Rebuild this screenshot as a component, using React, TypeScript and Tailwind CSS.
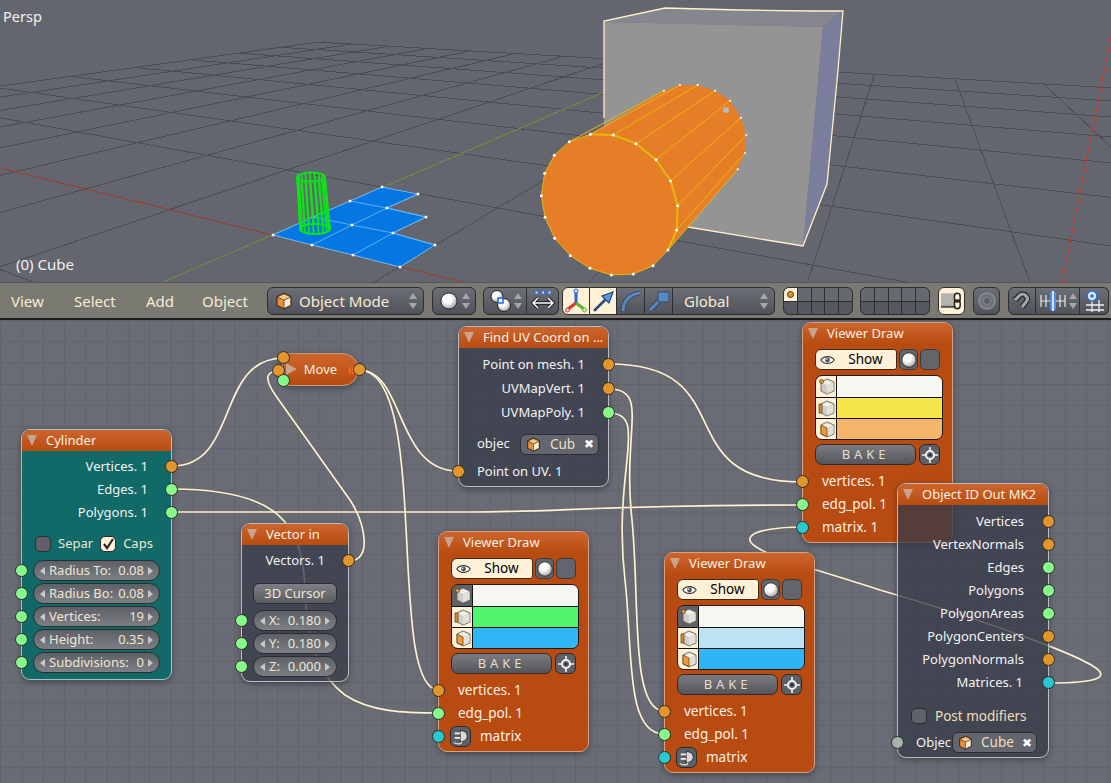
import React from 'react';

// perspective ground grid, taken from the vanishing points of the reference
const project = (u: number, v: number) => {
  const a = -0.1103 * u;
  const b = 0.2102 * v;
  const w = a + b + 1;
  return { x: (a * -760 + b * 911 + 272) / w, y: (a * -20 + b * -40 + 235) / w, w };
};

const gridLine = (fn: (t: number) => { x: number; y: number; w: number }) => {
  const pts: string[] = [];
  for (let t = -8; t <= 8; t += 0.25) {
    const p = fn(t);
    if (p.w > 0.04) pts.push(`${p.x.toFixed(1)},${p.y.toFixed(1)}`);
  }
  return pts.join(' ');
};

const range = [-8, -7, -6, -5, -4, -3, -2, -1, 0, 1, 2, 3, 4, 5, 6, 7, 8];

const disc = [[181, 403], [250, 405], [318, 431], [378, 479], [422, 543], [443, 617], [440, 690], [414, 750], [369, 797], [310, 822], [244, 825], [180, 805], [121, 767], [74, 715], [45, 652], [34, 587], [44, 520], [73, 466], [118, 425]].map(([x, y]) => [530 + x / 3, y / 3]);
const back = [[402, 272], [450, 255], [503, 255], [555, 272], [600, 302], [633, 353], [649, 405], [645, 459], [623, 508]].map(([x, y]) => [530 + x / 3, y / 3]);
const sides = [[0, 1], [1, 2], [2, 3], [3, 4], [4, 5], [5, 6], [6, 7], [7, 8]];
const toPts = (l: number[][]) => l.map(([x, y]) => `${x},${y}`).join(' ');

const planeVerts = [[273, 235], [312, 245], [353, 255], [400, 267], [435, 245], [393, 233], [426, 217], [387, 208], [418, 194], [382, 187], [350, 201], [313, 217], [352, 225]];

function Viewport() {
  const ring = Array.from({ length: 19 }, (_, i) => (i * Math.PI * 2) / 19);
  return (
    <div className="relative h-[282px] bg-[#63666e] overflow-hidden">
      <svg className="absolute inset-0" width="1111" height="282" viewBox="0 0 1111 282">
        <g fill="none" stroke="#4b4d51" strokeWidth="1" shapeRendering="crispEdges">
          {range.map((v) => <polyline key={`a${v}`} points={gridLine((t) => project(t, v))} />)}
          {range.map((u) => <polyline key={`b${u}`} points={gridLine((t) => project(u, t))} />)}
        </g>
        <g fill="none" strokeWidth="1" shapeRendering="crispEdges">
          <polyline points={gridLine((t) => project(t, 0))} stroke="#a03a2c" />
          <polyline points={gridLine((t) => project(0, t))} stroke="#6e8f3c" />
          <line x1="1111" y1="37" x2="1062" y2="283" stroke="#c23a36" />
        </g>

        {/* plane */}
        <polygon points="273,235 312,245 353,255 400,267 435,245 393,233 426,217 387,208 418,194 382,187 350,201 313,217" fill="#0577e3" stroke="#73bdf0" strokeWidth="1" />
        <g fill="none" stroke="#5fb0ee" strokeWidth="1">
          <polyline points="312,245 352,225 387,208 418,194" />
          <polyline points="353,255 393,233 426,217" />
          <polyline points="313,217 352,225 393,233 435,245" />
          <polyline points="350,201 387,208 426,217" />
        </g>
        {planeVerts.map(([x, y]) => <rect key={`${x}${y}`} x={x - 1.25} y={y - 1.25} width="2.5" height="2.5" fill="#fff" />)}

        {/* green wire cylinder */}
        <g fill="none" stroke="#12e01c" strokeWidth="1.8">
          <ellipse cx="311" cy="177" rx="14" ry="4.5" />
          <ellipse cx="315" cy="229" rx="15" ry="5" />
          {ring.map((a) => (
            <line key={a} x1={311 + 14 * Math.cos(a)} y1={177 + 4.5 * Math.sin(a)} x2={315 + 15 * Math.cos(a)} y2={229 + 5 * Math.sin(a)} />
          ))}
        </g>

        {/* cube */}
        <polygon points="604,21 665,8 843,11 823,27 604,22" fill="#868690" />
        <polygon points="843,11 827,184 803,246 823,27" fill="#7a7d9b" />
        <polygon points="604,22 823,27 803,246 688,227 604,215" fill="#949494" />
        <polyline points="604,118 604,21 665,8 702,9 740,10 809,11 843,11 838,70 827,184 803,246 688,227" fill="none" stroke="#fff0c8" strokeWidth="1.3" />

        {/* orange cylinder */}
        <polygon points={`${toPts(back)} ${toPts(disc.slice(7, 8))} ${toPts([disc[12], disc[18], disc[0]])}`} fill="#e57e26" />
        <polygon points={toPts(disc)} fill="#e57e26" />
        <g fill="none" stroke="#e8b60e" strokeWidth="1">
          {sides.map(([d, b], i) => <line key={i} x1={disc[d][0]} y1={disc[d][1]} x2={back[b][0]} y2={back[b][1]} />)}
          <line x1={disc[18][0]} y1={disc[18][1]} x2={back[0][0]} y2={back[0][1]} />
          <polygon points={toPts(disc)} />
        </g>
        <polyline points={toPts(disc.slice(0, 8))} fill="none" stroke="#e8b60e" strokeWidth="2" />
        {disc.map(([x, y], i) => <circle key={i} cx={x} cy={y} r="1.5" fill="#fff" />)}
        {back.map(([x, y], i) => <circle key={i} cx={x} cy={y} r="1" fill="#fff" />)}
        <circle cx="726" cy="110" r="3" fill="#b9b9b9" />
      </svg>
      <div className="absolute left-[3px] top-[7px] text-[14.5px] leading-[18px] text-[#f0f0f0]">Persp</div>
      <div className="absolute left-[16px] top-[255px] text-[15px] leading-[18px] text-[#f0f0f0]">(0) Cube</div>
    </div>
  );
}

/* ---------- small icons ---------- */

const Cube = ({ size = 18 }: { size?: number }) => (
  <svg width={size} height={size} viewBox="0 0 20 20" className="shrink-0">
    <polygon points="10,1 18,5 18,15 10,19 2,15 2,5" fill="#7a4a20" stroke="#3d2a18" strokeWidth="1" />
    <polygon points="10,2.5 16.5,5.5 10,8.5 3.5,5.5" fill="#f6c88c" />
    <polygon points="3,6.5 9.5,9.5 9.5,17.5 3,14.5" fill="#e8913a" />
    <polygon points="10.5,9.5 17,6.5 17,14.5 10.5,17.5" fill="#fbeedb" />
  </svg>
);

const Sphere = ({ size = 18 }: { size?: number }) => (
  <svg width={size} height={size} viewBox="0 0 20 20" className="shrink-0">
    <defs>
      <radialGradient id="ball" cx="0.4" cy="0.35" r="0.75">
        <stop offset="0.35" stopColor="#ffffff" />
        <stop offset="1" stopColor="#8d8d8d" />
      </radialGradient>
    </defs>
    <circle cx="10" cy="10" r="9" fill="url(#ball)" stroke="#1e1e1e" strokeWidth="1" />
  </svg>
);

const UpDown = () => (
  <svg width="8" height="20" viewBox="0 0 8 20" className="shrink-0">
    <polygon points="4,2 8,8 0,8" fill="#a5a7ab" />
    <polygon points="4,18 8,12 0,12" fill="#a5a7ab" />
  </svg>
);

const Pivot = () => (
  <svg width="24" height="24" viewBox="0 0 24 24">
    <circle cx="8" cy="7.5" r="6" fill="url(#ball)" stroke="#1e1e1e" />
    <circle cx="15" cy="16" r="6.5" fill="url(#ball)" stroke="#1e1e1e" />
    <rect x="9" y="9" width="5" height="5" fill="#fff" stroke="#2a6ae0" strokeWidth="1.6" />
  </svg>
);

const AlignArrows = () => (
  <svg width="24" height="24" viewBox="0 0 24 24">
    <rect x="4" y="2" width="3" height="3" fill="#cfe0f8" stroke="#2f6fd8" />
    <rect x="10.5" y="2" width="3" height="3" fill="#cfe0f8" stroke="#2f6fd8" />
    <rect x="17" y="2" width="3" height="3" fill="#cfe0f8" stroke="#2f6fd8" />
    <path d="M2 14h20M7 9l-5 5 5 5M17 9l5 5-5 5" fill="none" stroke="#1c1c1c" strokeWidth="3.4" />
    <path d="M2 14h20M7 9l-5 5 5 5M17 9l5 5-5 5" fill="none" stroke="#fff" strokeWidth="1.5" />
  </svg>
);

const Axes = () => (
  <svg width="24" height="26" viewBox="0 0 24 26">
    <path d="M12 15V4" stroke="#2f63d8" strokeWidth="3" />
    <path d="M12 15L4 21" stroke="#d8362c" strokeWidth="3" />
    <path d="M12 15l8 6" stroke="#59b432" strokeWidth="3" />
    <circle cx="12" cy="3" r="2" fill="#dfe8f8" stroke="#2f63d8" />
    <circle cx="3.5" cy="22" r="2" fill="#f4d4d0" stroke="#d8362c" />
    <circle cx="20.5" cy="22" r="2" fill="#e0f0d0" stroke="#59b432" />
  </svg>
);

const ArrowIcon = () => (
  <svg width="24" height="24" viewBox="0 0 24 24">
    <path d="M3 21L14 10l-3-3 11-4-4 11-3-3L4 22z" fill="#5a9ce8" stroke="#24426c" strokeWidth="1.2" />
  </svg>
);

const ArcIcon = () => (
  <svg width="24" height="24" viewBox="0 0 24 24">
    <path d="M4 22C4 12 11 5 21 4" fill="none" stroke="#3a4a5e" strokeWidth="5" />
    <path d="M4 22C4 12 11 5 21 4" fill="none" stroke="#5688c2" strokeWidth="3" />
  </svg>
);

const ScaleIcon = () => (
  <svg width="24" height="24" viewBox="0 0 24 24">
    <path d="M3 21L13 11" stroke="#3a4a5e" strokeWidth="5" />
    <path d="M3 21L13 11" stroke="#5688c2" strokeWidth="3" />
    <rect x="11" y="3" width="11" height="10" fill="#5688c2" stroke="#3a4a5e" />
  </svg>
);

const LinkIcon = () => (
  <svg width="26" height="24" viewBox="0 0 26 24">
    <rect x="2" y="4" width="15" height="15" fill="#b4b4ae" />
    <rect x="2" y="17" width="15" height="2" fill="#55554f" />
    <rect x="16" y="4" width="6" height="9" rx="3" fill="none" stroke="#222" strokeWidth="1.5" />
    <rect x="16" y="11" width="6" height="9" rx="3" fill="none" stroke="#222" strokeWidth="1.5" />
  </svg>
);

const TargetRing = () => (
  <svg width="20" height="20" viewBox="0 0 20 20">
    <circle cx="10" cy="10" r="8" fill="#70737a" stroke="#8b8e94" strokeWidth="1.5" />
    <circle cx="10" cy="10" r="3.5" fill="#5a5d63" stroke="#878a90" />
  </svg>
);

const Magnet = () => (
  <svg width="22" height="22" viewBox="0 0 22 22">
    <path d="M4 10L9 5c4-3 10 3 6 7l-4 5" fill="none" stroke="#26282c" strokeWidth="5.5" />
    <path d="M4 10L9 5c4-3 10 3 6 7l-4 5" fill="none" stroke="#a4a6aa" strokeWidth="3" />
  </svg>
);

const SnapIncrement = () => (
  <svg width="28" height="22" viewBox="0 0 28 22">
    <path d="M2 5v12M7 5v12M21 5v12M26 5v12M2 11h24" fill="none" stroke="#e8e8e8" strokeWidth="1.2" />
    <rect x="11" y="1" width="6" height="20" rx="3" fill="#4f8fe8" />
    <rect x="13" y="1" width="2" height="20" fill="#cfe0f8" />
  </svg>
);

const SnapGrid = () => (
  <svg width="24" height="24" viewBox="0 0 24 24">
    <path d="M4 16h18M4 21h18M10 11v12M17 11v12" fill="none" stroke="#f0f0f0" strokeWidth="1.3" />
    <circle cx="10" cy="7" r="5" fill="#dfe8f8" stroke="#2f6fd8" strokeWidth="1.6" />
    <circle cx="10" cy="7" r="1.8" fill="#2f6fd8" />
  </svg>
);

const Eye = () => (
  <svg width="15" height="10" viewBox="0 0 20 12" className="shrink-0">
    <path d="M1 6c4-6 14-6 18 0-4 6-14 6-18 0z" fill="#fff" stroke="#333" strokeWidth="1.4" />
    <circle cx="10" cy="6" r="3.2" fill="#555" />
    <circle cx="9" cy="5" r="1" fill="#fff" />
  </svg>
);

const Crosshair = () => (
  <svg width="16" height="16" viewBox="0 0 16 16">
    <circle cx="8" cy="8" r="4" fill="none" stroke="#f2f2f2" strokeWidth="2" />
    <path d="M8 0v4M8 12v4M0 8h4M12 8h4" stroke="#f2f2f2" strokeWidth="1.6" />
    <circle cx="8" cy="8" r="1.2" fill="#222" />
  </svg>
);

const Plug = () => (
  <svg width="18" height="18" viewBox="0 0 20 20">
    <path d="M9 3h2a6 6 0 010 12H9z" fill="#d8d8d8" stroke="#222" />
    <path d="M3 6h6M3 11h6" stroke="#f0f0f0" strokeWidth="2" />
    <path d="M11 15c0 4-7 3-9 1" fill="none" stroke="#e0e0e0" strokeWidth="1.4" />
  </svg>
);

const CheckMark = () => (
  <svg width="14" height="14" viewBox="0 0 14 14">
    <path d="M3 7l3 4 6-9" fill="none" stroke="#2a2a2a" strokeWidth="2.2" />
  </svg>
);

const TileCube = ({ mark }: { mark: 'dot' | 'side' | 'face' }) => (
  <svg width="17" height="17" viewBox="0 0 17 17">
    <polygon points="9,1 16,4 16,13 9,16 3,13 3,4" fill="#cfcdc6" stroke="#5b5b55" strokeWidth="0.8" />
    <polygon points="9,2 15,4.5 9,7 4,4.5" fill="#f2efe8" />
    <polygon points="9,7.5 15.5,5 15.5,12.5 9,15.5" fill="#e3e0d8" />
    {mark === 'dot' && <circle cx="3.5" cy="3.5" r="2" fill="#e89a3a" stroke="#5a3a10" strokeWidth="0.7" />}
    {mark === 'side' && <rect x="1" y="4" width="3" height="9" fill="#d98a35" stroke="#5a3a10" strokeWidth="0.7" />}
    {mark === 'face' && <polygon points="3,4 9,7 9,15.5 3,13" fill="#f09a3c" stroke="#5a3a10" strokeWidth="0.7" />}
  </svg>
);

/* ---------- node parts ---------- */

const socketColor = {
  orange: 'bg-[#e2952a]',
  green: 'bg-[#86f98a]',
  cyan: 'bg-[#27c9cf]',
  gray: 'bg-[#a3b3ab]',
};

const Socket = ({ color, className }: { color: keyof typeof socketColor; className: string }) => (
  <span className={`absolute z-10 h-[13px] w-[13px] rounded-full border border-[#2c2c2c] ${socketColor[color]} ${className}`} />
);

const NodeHeader = ({ title }: { title: string }) => (
  <div className="flex h-[21px] shrink-0 items-center gap-[9px] rounded-t-[8px] bg-gradient-to-b from-[#cc652c] to-[#b84c10] pl-[5px] text-[13px] whitespace-nowrap text-[#f8f0e2]">
    <span className="h-0 w-0 border-x-[5px] border-t-[11px] border-x-transparent border-t-[#c8a390]" />
    {title}
  </div>
);

const OutRow = ({ label, color, pr = 'pr-[23px]', h = 'h-[23px]' }: { label: string; color: keyof typeof socketColor; pr?: string; h?: string }) => (
  <div className={`relative flex shrink-0 items-center justify-end text-[13px] whitespace-nowrap text-[#f2f2f2] ${h} ${pr}`}>
    {label}
    <Socket color={color} className="right-[-7px] top-[5px]" />
  </div>
);

const Field = ({ label, value, socket = true }: { label: string; value: string; socket?: boolean }) => (
  <div className="relative flex h-[23px] shrink-0 items-center">
    {socket && <Socket color="green" className="left-[-7px] top-[5px]" />}
    <div className="mx-[11px] flex h-[21px] flex-1 items-center justify-between rounded-full border border-[#2a2c30] bg-gradient-to-b from-[#5d6066] to-[#7d7f84] px-[6px] text-[13px] text-[#efe6d3]">
      <span className="h-0 w-0 border-y-[4px] border-r-[5px] border-y-transparent border-r-[#c8c8c8]" />
      <span className="flex flex-1 justify-between px-[4px] whitespace-nowrap">
        <span>{label}</span>
        <span>{value}</span>
      </span>
      <span className="h-0 w-0 border-y-[4px] border-l-[5px] border-y-transparent border-l-[#c8c8c8]" />
    </div>
  </div>
);

const Picker = ({ label, className }: { label: string; className: string }) => (
  <div className={`flex h-[21px] items-center justify-between rounded-[6px] border border-[#2c2e34] bg-[#63666e] pl-[5px] pr-[4px] text-[13.5px] text-[#f0dfb8] ${className}`}>
    <Cube size={15} />
    <span>{label}</span>
    <span className="text-[12px] leading-none font-bold text-white">✖</span>
  </div>
);

type ViewerProps = {
  className: string;
  swatches: string[];
  firstDark?: boolean;
  matrixPlug?: boolean;
};

function ViewerDraw({ className, swatches, firstDark, matrixPlug }: ViewerProps) {
  const marks: ('dot' | 'side' | 'face')[] = ['dot', 'side', 'face'];
  return (
    <div className={`absolute flex h-[221px] w-[151px] flex-col rounded-[9px] border border-[#d9a184] bg-[#b84b12] shadow-[0_2px_6px_rgba(0,0,0,0.35)] ${className}`}>
      <NodeHeader title="Viewer Draw" />
      <div className="flex flex-col px-[12px] pt-[5px]">
        <div className="flex h-[21px] gap-[2px]">
          <div className="flex w-[84px] items-center rounded-l-[6px] rounded-r-[3px] border border-[#3a2a1c] bg-[#fff1d8] pl-[4px] text-[13.5px] text-black">
            <Eye />
            <span className="flex-1 text-center">Show</span>
          </div>
          <div className="flex w-[20px] items-center justify-center rounded-[5px] border border-[#3a3a3a] bg-[#62656c]">
            <Sphere size={16} />
          </div>
          <div className="w-[20px] rounded-[5px] border border-[#3a3a3a] bg-[#62656c]" />
        </div>
        <div className="mt-[5px] flex w-[128px] flex-col overflow-hidden rounded-[7px] border border-[#1c1c1c]">
          {swatches.map((c, i) => (
            <div key={i} className={`flex h-[21px] border-[#111] ${i > 0 ? 'border-t' : ''}`}>
              <div className={`flex w-[21px] items-center justify-center border-r border-[#111] ${firstDark && i === 0 ? 'bg-[#5e6168]' : 'bg-[#fff1d8]'}`}>
                <TileCube mark={marks[i]} />
              </div>
              <div className={`flex-1 ${c}`} />
            </div>
          ))}
        </div>
        <div className="mt-[4px] flex h-[21px] justify-between">
          <div className="flex w-[101px] items-center justify-center rounded-[7px] border border-[#2c2c2c] bg-gradient-to-b from-[#7a7c80] to-[#54565c] text-[13px] tracking-[0.3em] text-[#e6dcc8]">BAKE</div>
          <div className="flex w-[21px] items-center justify-center rounded-[6px] border border-[#2c2c2c] bg-[#5d6067]">
            <Crosshair />
          </div>
        </div>
      </div>
      <div className="mt-[5px] flex flex-col text-[13.5px] text-[#fbf0e6]">
        <div className="relative flex h-[23px] items-center pl-[19px]">
          <Socket color="orange" className="left-[-7px] top-[5px]" />
          vertices. 1
        </div>
        <div className="relative flex h-[23px] items-center pl-[19px]">
          <Socket color="green" className="left-[-7px] top-[5px]" />
          edg_pol. 1
        </div>
        <div className="relative flex h-[23px] items-center pl-[19px]">
          <Socket color="cyan" className="left-[-7px] top-[5px]" />
          {matrixPlug ? (
            <>
              <span className="ml-[-8px] flex h-[21px] w-[21px] items-center justify-center rounded-[6px] border border-[#2c2c2c] bg-[#5d6067]">
                <Plug />
              </span>
              <span className="ml-[9px]">matrix</span>
            </>
          ) : (
            'matrix. 1'
          )}
        </div>
      </div>
    </div>
  );
}

/* ---------- editor ---------- */

const wires = [
  'M172,466 C240,466 215,358 284,358',
  'M349,561 C372,561 366,525 350,500 L276,396 C262,376 268,371 279,371',
  'M359,370 C432,370 385,690 439,690',
  'M359,370 C405,370 395,471 458,471',
  'M172,489 C280,489 303,525 305,590 C308,650 322,678 345,695 C370,712 405,713 439,713',
  'M172,512 L470,512 C560,512 600,505 802,505',
  'M609,364 C745,364 665,482 802,482',
  'M609,389 C650,389 622,430 632,520 C640,600 630,711 664,711',
  'M609,413 C650,413 612,470 625,580 C633,650 625,734 664,734',
  'M1049,683 C1085,683 1105,680 1100,672 C1093,660 1000,625 880,590 C820,570 745,552 750,538 C753,530 780,527 802,527',
];

const Layers = ({ active }: { active?: boolean }) => (
  <div className="grid h-[28px] w-[70px] grid-cols-5 grid-rows-2 gap-px overflow-hidden rounded-[6px] border border-[#2e2e2e] bg-[#2e2e2e]">
    {Array.from({ length: 10 }, (_, i) => (
      <div key={i} className={active && i === 0 ? 'flex items-center justify-center bg-[#fff1d8]' : i < 5 ? 'bg-[#66696f]' : 'bg-[#55585e]'}>
        {active && i === 0 && <span className="h-[7px] w-[7px] rounded-full border border-[#4a3010] bg-[#e2952a]" />}
      </div>
    ))}
  </div>
);

const btn = 'h-[28px] flex items-center border border-[#2e2e2e] bg-gradient-to-b from-[#6c6f75] to-[#505359]';

function Toolbar() {
  return (
    <div className="flex h-[38px] shrink-0 items-center border-t border-[#55565a] border-b-2 border-b-[#1a1a1a] bg-[#7a7a72] pt-[1px] pl-[11px] text-[15px] text-[#f6ecd4]">
      <span className="w-[63px]">View</span>
      <span className="w-[72px]">Select</span>
      <span className="w-[56px]">Add</span>
      <span className="w-[65px]">Object</span>
      <div className={`${btn} w-[157px] rounded-[6px] pl-[7px] pr-[6px]`}>
        <Cube />
        <span className="ml-[6px] flex-1">Object Mode</span>
        <UpDown />
      </div>
      <div className={`${btn} ml-[8px] w-[44px] gap-[4px] rounded-[6px] pl-[7px]`}>
        <Sphere />
        <UpDown />
      </div>
      <div className={`${btn} ml-[7px] w-[44px] gap-[1px] rounded-l-[6px] pl-[5px]`}>
        <Pivot />
        <UpDown />
      </div>
      <div className={`${btn} w-[32px] justify-center rounded-r-[6px] border-l-0`}>
        <AlignArrows />
      </div>
      <div className="ml-[3px] flex">
        <div className="flex h-[28px] w-[28px] items-center justify-center rounded-l-[6px] border border-[#2e2e2e] bg-[#fff1d8]"><Axes /></div>
        <div className="flex h-[28px] w-[27px] items-center justify-center border-y border-r border-[#2e2e2e] bg-[#fff1d8]"><ArrowIcon /></div>
        <div className={`${btn} w-[28px] justify-center border-l-0`}><ArcIcon /></div>
        <div className={`${btn} w-[28px] justify-center border-l-0`}><ScaleIcon /></div>
        <div className={`${btn} w-[102px] justify-between rounded-r-[6px] border-l-0 pl-[11px] pr-[6px]`}>
          Global
          <UpDown />
        </div>
      </div>
      <div className="ml-[8px]"><Layers active /></div>
      <div className="ml-[7px]"><Layers /></div>
      <div className="ml-[8px] flex h-[28px] w-[27px] items-center justify-center rounded-[6px] border border-[#2e2e2e] bg-[#fff1d8]"><LinkIcon /></div>
      <div className={`${btn} ml-[8px] w-[27px] justify-center rounded-[6px]`}><TargetRing /></div>
      <div className={`${btn} ml-[8px] w-[28px] justify-center rounded-l-[6px]`}><Magnet /></div>
      <div className={`${btn} w-[44px] justify-center gap-[2px] border-l-0`}><SnapIncrement /><UpDown /></div>
      <div className={`${btn} w-[29px] justify-center rounded-r-[6px] border-l-0`}><SnapGrid /></div>
    </div>
  );
}

const darkNode = 'absolute flex flex-col rounded-[9px] border border-[#b9bcc2] bg-[#373947c4] shadow-[0_2px_6px_rgba(0,0,0,0.35)]';

function NodeEditor() {
  return (
    <div className="relative flex-1 overflow-hidden bg-[#696c74] bg-[linear-gradient(#60636a_1px,transparent_1px),linear-gradient(90deg,#60636a_1px,transparent_1px)] bg-[size:21.3px_21.3px]">
      <svg className="absolute inset-0" width="1111" height="463" viewBox="0 320 1111 463">
        <g fill="none" strokeLinecap="round">
          {wires.map((d) => <path key={d} d={d} stroke="rgba(120,100,60,0.3)" strokeWidth="3.5" />)}
          {wires.map((d) => <path key={d + 'c'} d={d} stroke="#f8f2da" strokeWidth="1.7" />)}
        </g>
      </svg>

      {/* Cylinder */}
      <div className="absolute left-[21px] top-[109px] flex h-[251px] w-[151px] flex-col rounded-[9px] border border-[#a9c2c0] bg-[#116968] shadow-[0_2px_6px_rgba(0,0,0,0.35)]">
        <NodeHeader title="Cylinder" />
        <div className="flex flex-col pt-[4px] text-[#e9f3f2]">
          <OutRow label="Vertices. 1" color="orange" />
          <OutRow label="Edges. 1" color="green" />
          <OutRow label="Polygons. 1" color="green" />
          <div className="mt-[10px] mb-[5px] flex h-[20px] items-center pl-[13px] text-[13px] text-[#efe6d3]">
            <span className="h-[16px] w-[16px] rounded-[5px] border border-[#2c2c2c] bg-[#5f626a]" />
            <span className="ml-[7px]">Separ</span>
            <span className="ml-[7px] flex h-[16px] w-[16px] items-center justify-center rounded-[5px] border border-[#2c2c2c] bg-[#fff1d8]"><CheckMark /></span>
            <span className="ml-[7px]">Caps</span>
          </div>
          <Field label="Radius To:" value="0.08" />
          <Field label="Radius Bo:" value="0.08" />
          <Field label="Vertices:" value="19" />
          <Field label="Height:" value="0.35" />
          <Field label="Subdivisions:" value="0" />
        </div>
      </div>

      {/* Vector in */}
      <div className={`${darkNode} left-[241px] top-[203px] h-[159px] w-[108px]`}>
        <NodeHeader title="Vector in" />
        <div className="flex flex-col pt-[4px]">
          <OutRow label="Vectors. 1" color="orange" />
          <div className="mx-[11px] mt-[11px] mb-[5px] flex h-[21px] items-center justify-center rounded-[6px] border border-[#2a2c30] bg-gradient-to-b from-[#7d7f84] to-[#5a5d63] text-[13px] text-[#efe6d3]">3D Cursor</div>
          <Field label="X:" value="0.180" />
          <Field label="Y:" value="0.180" />
          <Field label="Z:" value="0.000" />
        </div>
      </div>

      {/* Move */}
      <div className="absolute left-[282px] top-[33px] flex h-[33px] w-[77px] items-center justify-center rounded-l-[9px] rounded-r-[17px] border border-[#c99a7a] bg-gradient-to-b from-[#cc652c] to-[#b84c10] text-[13px] text-[#f8f0e2] shadow-[0_2px_6px_rgba(0,0,0,0.35)]">
        <span className="absolute left-[3px] top-[9px] h-0 w-0 border-y-[6px] border-l-[11px] border-y-transparent border-l-[#c8a390]" />
        Move
        <span className="absolute right-[4px] top-[13px] h-[7px] w-[5px] border-x-2 border-[#f06a1a]" />
      </div>
      <Socket color="orange" className="left-[277px] top-[31px]" />
      <Socket color="orange" className="left-[272px] top-[44px]" />
      <Socket color="green" className="left-[277px] top-[54px]" />
      <Socket color="orange" className="left-[353px] top-[43px]" />

      {/* Find UV Coord */}
      <div className={`${darkNode} left-[458px] top-[6px] h-[161px] w-[151px]`}>
        <NodeHeader title="Find UV Coord on ..." />
        <div className="flex flex-col pt-[5px]">
          <OutRow label="Point on mesh. 1" color="orange" h="h-[24px]" />
          <OutRow label="UVMapVert. 1" color="orange" h="h-[24px]" />
          <OutRow label="UVMapPoly. 1" color="green" h="h-[24px]" />
          <div className="mt-[8px] flex h-[22px] items-center pl-[18px] text-[13px] text-[#f2f2f2]">
            <span className="w-[43px]">objec</span>
            <Picker label="Cub" className="w-[79px]" />
          </div>
          <div className="relative mt-[5px] flex h-[23px] items-center pl-[18px] text-[13px] text-[#f2f2f2]">
            <Socket color="orange" className="left-[-7px] top-[5px]" />
            Point on UV. 1
          </div>
        </div>
      </div>

      <ViewerDraw className="left-[438px] top-[211px]" swatches={['bg-[#f7f7f2]', 'bg-[#52f56f]', 'bg-[#2fb8f5]']} firstDark matrixPlug />
      <ViewerDraw className="left-[664px] top-[232px]" swatches={['bg-[#f7f7f2]', 'bg-[#bde2f2]', 'bg-[#2fb4f5]']} firstDark matrixPlug />
      <ViewerDraw className="left-[802px] top-[2px]" swatches={['bg-[#f7f7f2]', 'bg-[#f5e44a]', 'bg-[#f5b56a]']} />

      {/* Object ID Out */}
      <div className={`${darkNode} left-[897px] top-[163px] h-[275px] w-[152px]`}>
        <NodeHeader title="Object ID Out MK2" />
        <div className="flex flex-col pt-[5px]">
          <OutRow label="Vertices" color="orange" pr="pr-[24px]" />
          <OutRow label="VertexNormals" color="orange" pr="pr-[24px]" />
          <OutRow label="Edges" color="green" pr="pr-[24px]" />
          <OutRow label="Polygons" color="green" pr="pr-[24px]" />
          <OutRow label="PolygonAreas" color="green" pr="pr-[24px]" />
          <OutRow label="PolygonCenters" color="orange" pr="pr-[24px]" />
          <OutRow label="PolygonNormals" color="orange" pr="pr-[24px]" />
          <OutRow label="Matrices. 1" color="cyan" pr="pr-[25px]" />
          <div className="mt-[12px] flex h-[20px] items-center pl-[13px] text-[13.5px] text-[#f0dfb8]">
            <span className="h-[16px] w-[16px] rounded-[5px] border border-[#2c2c2c] bg-[#5f626a]" />
            <span className="ml-[8px]">Post modifiers</span>
          </div>
          <div className="relative mt-[6px] flex h-[21px] items-center pl-[18px] text-[13px] text-[#f2f2f2]">
            <Socket color="gray" className="left-[-7px] top-[4px]" />
            <span className="w-[36px] whitespace-nowrap">Objec</span>
            <Picker label="Cube" className="w-[85px]" />
          </div>
        </div>
      </div>
    </div>
  );
}

export default function App() {
  return (
    <div className="flex h-[783px] w-[1111px] flex-col overflow-hidden font-['Noto_Sans','DejaVu_Sans',sans-serif]">
      <Viewport />
      <Toolbar />
      <NodeEditor />
    </div>
  );
}
